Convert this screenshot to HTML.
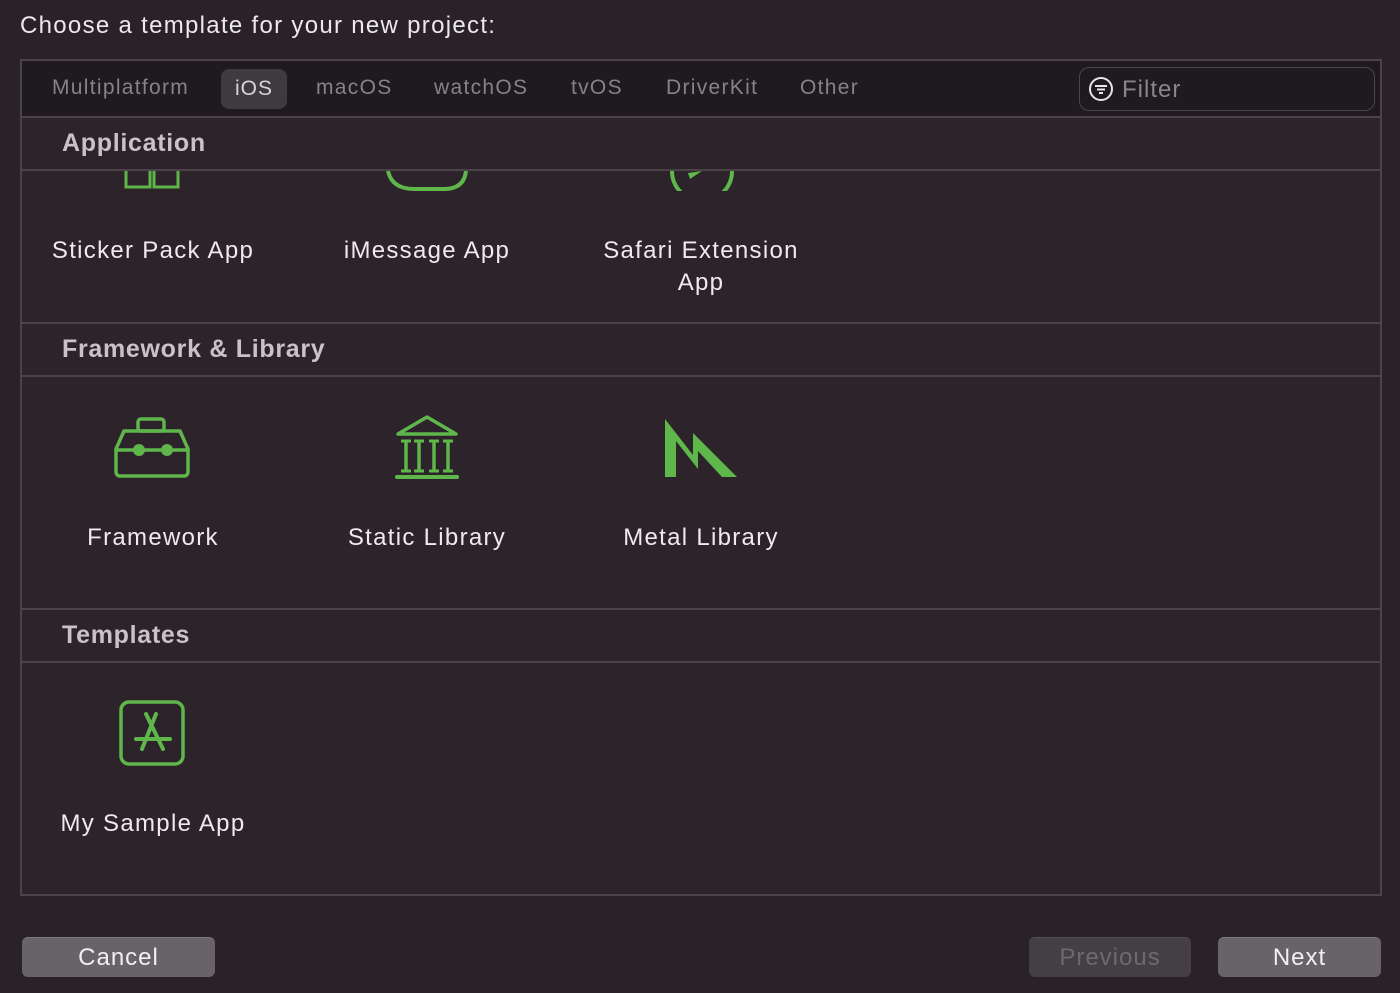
<!DOCTYPE html>
<html><head><meta charset="utf-8"><style>
*{margin:0;padding:0;box-sizing:border-box}
body{width:1400px;height:993px;background:#2a2229;font-family:"Liberation Sans",sans-serif;position:relative;overflow:hidden;color:#ece8ec}
.a{position:absolute}
.title{left:20px;top:12px;font-size:24px;color:#ece8ec;letter-spacing:1.3px;white-space:nowrap}
.panel{left:20px;top:59px;width:1362px;height:837px;border:2px solid #4a4449;background:#2c232b;overflow:hidden}
.tabs{left:0;top:0;width:1360px;height:57px;background:#1f1a1f;border-bottom:2px solid #4a4449}
.tab{top:15px;font-size:21px;color:#888288;letter-spacing:1.3px;white-space:nowrap}
.ios{left:199px;top:8px;width:66px;height:40px;background:#3f3a3f;border-radius:8px;color:#d8d4d8;text-align:center;line-height:40px;font-size:21px;letter-spacing:1px}
.filter{left:1057px;top:6px;width:296px;height:44px;border:1px solid #4a454a;border-radius:10px}
.sh{left:0;width:1360px;height:53px;border-bottom:2px solid #4a4449;font-weight:bold;font-size:25px;color:#c9c3c9;padding-left:40px;line-height:50px;letter-spacing:0.7px}
.sep{left:0;width:1360px;height:2px;background:#4a4449}
.lbl{font-size:24px;text-align:center;width:300px;color:#eeeaee;line-height:32px;letter-spacing:1.3px}
.btn{top:937px;height:40px;border-radius:6px;background:#686368;text-align:center;line-height:40px;font-size:24px;color:#f2eff2;border-top:1px solid #7d787d;letter-spacing:1px}
</style></head><body>
<div class="a title">Choose a template for your new project:</div>
<div class="a panel">
  <div class="a tabs">
    <div class="a tab" style="left:30px">Multiplatform</div>
    <div class="a ios">iOS</div>
    <div class="a tab" style="left:294px">macOS</div>
    <div class="a tab" style="left:412px">watchOS</div>
    <div class="a tab" style="left:549px">tvOS</div>
    <div class="a tab" style="left:644px">DriverKit</div>
    <div class="a tab" style="left:778px">Other</div>
    <div class="a filter">
      <svg class="a" style="left:8px;top:8px" width="26" height="26" viewBox="0 0 26 26"><circle cx="13" cy="13" r="11" fill="none" stroke="#e8e4e8" stroke-width="2"/><path d="M7 10h12M9 13.5h8M11 17h4" stroke="#e8e4e8" stroke-width="2"/></svg>
      <div class="a" style="left:42px;top:8px;font-size:24px;color:#8a858a;letter-spacing:1px">Filter</div>
    </div>
  </div>
  <div class="a sh" style="top:57px">Application</div>
  <svg class="a" style="left:0;top:110px" width="900" height="20">
    <path d="M104 0v16h24v-16M132 0v16h24v-16" fill="none" stroke="#5fb64b" stroke-width="3"/>
    <path d="M366 0 q4 18 26 18 h30 q20 0 22-18" fill="none" stroke="#5fb64b" stroke-width="4"/>
    <path d="M650 0 a30 30 0 0 0 60 0" fill="none" stroke="#5fb64b" stroke-width="4"/>
    <path d="M666 2 l14 -2 l-12 8z" fill="#5fb64b"/>
  </svg>
  <div class="a lbl" style="left:-19px;top:174px">Sticker Pack App</div>
  <div class="a lbl" style="left:255px;top:174px">iMessage App</div>
  <div class="a lbl" style="left:529px;top:174px">Safari Extension<br>App</div>
  <div class="a sep" style="top:261px"></div>
  <div class="a sh" style="top:263px">Framework &amp; Library</div>
  <svg class="a" style="left:90px;top:352px" width="80" height="70" viewBox="0 0 80 70">
    <rect x="26" y="6" width="26" height="12" rx="3" fill="none" stroke="#5fb64b" stroke-width="3.5"/>
    <path d="M12 18h56l8 18v23a4 4 0 0 1-4 4H8a4 4 0 0 1-4-4V36z" fill="none" stroke="#5fb64b" stroke-width="3.5"/>
    <path d="M4 37h72" stroke="#5fb64b" stroke-width="3.5"/>
    <circle cx="27" cy="37" r="6" fill="#5fb64b"/><circle cx="55" cy="37" r="6" fill="#5fb64b"/>
  </svg>
  <svg class="a" style="left:370px;top:352px" width="70" height="70" viewBox="0 0 70 70">
    <path d="M35 4 L64 21 H6 Z" fill="none" stroke="#5fb64b" stroke-width="3.5" stroke-linejoin="round"/>
    <path d="M14 28v30M27 28v30M42 28v30M56 28v30" stroke="#5fb64b" stroke-width="3.5"/>
    <path d="M9 28h10M22 28h10M37 28h10M51 28h10M9 58h10M22 58h10M37 58h10M51 58h10" stroke="#5fb64b" stroke-width="3"/>
    <rect x="3" y="62" width="64" height="4" rx="2" fill="#5fb64b"/>
  </svg>
  <svg class="a" style="left:643px;top:358px" width="76" height="62" viewBox="0 0 76 62">
    <path d="M0 0 L28 36 L28 14 L72 58 L57 58 L33 32 L33 50 L11 22 L11 58 L0 58Z" fill="#5fb64b"/>
  </svg>
  <div class="a lbl" style="left:-19px;top:461px">Framework</div>
  <div class="a lbl" style="left:255px;top:461px">Static Library</div>
  <div class="a lbl" style="left:529px;top:461px">Metal Library</div>
  <div class="a sep" style="top:547px"></div>
  <div class="a sh" style="top:549px">Templates</div>
  <svg class="a" style="left:96px;top:638px" width="68" height="68" viewBox="0 0 68 68">
    <rect x="3" y="3" width="62" height="62" rx="8" fill="none" stroke="#5fb64b" stroke-width="3.5"/>
    <path d="M28 15 L45 50 M38 15 L24 50 M18 40 H52" stroke="#5fb64b" stroke-width="4" stroke-linecap="round"/>
  </svg>
  <div class="a lbl" style="left:-19px;top:747px">My Sample App</div>
</div>
<div class="a btn" style="left:22px;width:193px">Cancel</div>
<div class="a btn" style="left:1029px;width:162px;background:#443f44;color:#6e696e;border-top-color:#525052">Previous</div>
<div class="a btn" style="left:1218px;width:163px">Next</div>
</body></html>
